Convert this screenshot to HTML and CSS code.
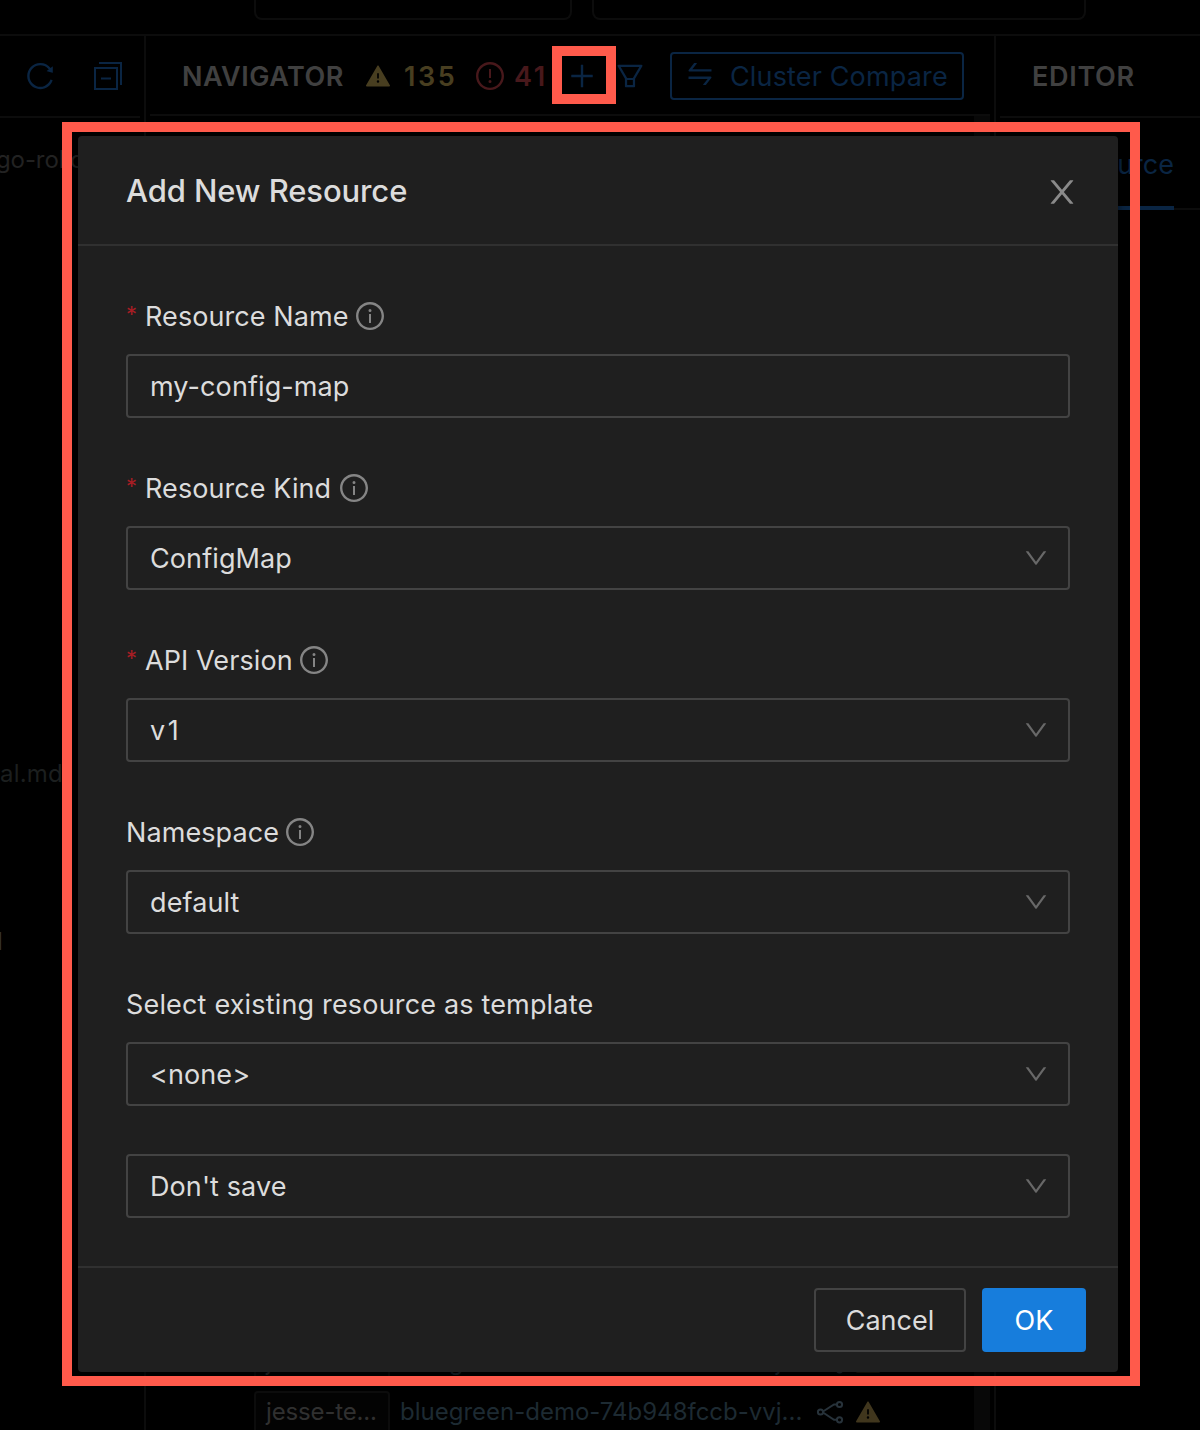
FILE: index.html
```html
<!DOCTYPE html>
<html lang="en">
<head>
<meta charset="utf-8">
<title>Add New Resource</title>
<link rel="stylesheet" href="styles.css">
</head>
<body>
<svg class="sprite" aria-hidden="true">
  <symbol id="info" viewBox="64 64 896 896"><path d="M512 64C264.6 64 64 264.6 64 512s200.6 448 448 448 448-200.6 448-448S759.4 64 512 64zm0 820c-205.4 0-372-166.6-372-372s166.6-372 372-372 372 166.6 372 372-166.6 372-372 372z"/><path d="M464 336a48 48 0 1096 0 48 48 0 10-96 0zm72 112h-48c-4.4 0-8 3.6-8 8v272c0 4.4 3.6 8 8 8h48c4.4 0 8-3.6 8-8V456c0-4.4-3.6-8-8-8z"/></symbol>
  <symbol id="down" viewBox="64 64 896 896"><path d="M884 256h-75c-5.1 0-9.9 2.5-12.9 6.6L512 654.2 227.9 262.6c-3-4.1-7.8-6.6-12.9-6.6h-75c-6.5 0-10.3 7.4-6.5 12.7l352.6 486.1c12.8 17.6 39 17.6 51.7 0l352.6-486.1c3.9-5.3.1-12.7-6.4-12.7z"/></symbol>
  <symbol id="warning" viewBox="64 64 896 896"><path d="M955.7 856l-416-720c-6.2-10.7-16.9-16-27.7-16s-21.6 5.3-27.7 16l-416 720C56 877.4 71.4 904 96 904h832c24.6 0 40-26.6 27.7-48zM480 416c0-4.4 3.6-8 8-8h48c4.4 0 8 3.6 8 8v184c0 4.4-3.6 8-8 8h-48c-4.4 0-8-3.6-8-8V416zm32 352a48.01 48.01 0 010-96 48.01 48.01 0 010 96z"/></symbol>
  <symbol id="links" viewBox="0 0 28 24"><g fill="none" stroke="currentColor" stroke-width="2"><circle cx="4.5" cy="12" r="2.6"/><circle cx="23.5" cy="4.5" r="2.6"/><circle cx="23.5" cy="19.8" r="2.6"/><path d="M7 11.500L18 4.500h3M7 12.500L18 19.800h3"/></g></symbol>
</svg>

<div class="app">
  <header class="topbar">
    <div class="search search-project"></div>
    <div class="search search-cluster"></div>
  </header>
  <div class="panes">
    <section class="pane files">
      <div class="pane-head">
        <svg class="icon i28" viewBox="64 64 896 896"><path d="M909.1 209.3l-56.4 44.1C775.8 155.1 656.2 92 521.9 92 290 92 102.3 279.5 102 511.5 101.7 743.7 289.8 932 521.9 932c181.3 0 335.8-115 394.6-276.1 1.5-4.2-.7-8.900-4.900-10.300l-56.700-19.500a8 8 0 00-10.100 4.800c-1.800 5-3.800 10-5.900 14.900-17.300 41-42.100 77.800-73.700 109.400A344.770 344.770 0 01655.900 829c-42.300 17.900-87.400 27-133.800 27-46.500 0-91.500-9.100-133.800-27A341.500 341.500 0 01279 755.200a342.160 342.160 0 01-73.700-109.400c-17.900-42.400-27-87.400-27-133.900s9.100-91.500 27-133.900c17.300-41 42.100-77.800 73.700-109.400 31.600-31.600 68.400-56.400 109.300-73.800 42.300-17.900 87.400-27 133.800-27 46.500 0 91.500 9.100 133.800 27a341.500 341.500 0 01109.300 73.800c9.900 9.900 19.200 20.400 27.800 31.400l-60.200 47a8 8 0 003 14.100l175.600 43c5 1.200 9.900-2.600 9.900-7.700l.8-180.900c-.1-6.600-7.800-10.300-13-6.200z"/></svg>
        <svg class="icon i28" viewBox="0 0 28 28"><path fill="none" stroke="currentColor" stroke-width="2" d="M5 1h22v22M1 6h22v21H1zM7 16.500h10"/></svg>
      </div>
      <div class="tree">
        <div class="tree-row">go-rollouts</div>
        <div class="tree-row doc">al.md</div>
        <div class="tree-row tail">l</div>
      </div>
    </section>
    <section class="pane navigator">
      <div class="pane-head">
        <h2 class="pane-title">NAVIGATOR</h2>
        <span class="count warn"><svg class="icon i24" viewBox="0 0 24 24"><use href="#warning"/></svg><b>135</b></span>
        <span class="count error"><svg class="icon i28" viewBox="64 64 896 896"><path d="M512 64C264.6 64 64 264.6 64 512s200.6 448 448 448 448-200.6 448-448S759.4 64 512 64zm0 820c-205.4 0-372-166.6-372-372s166.6-372 372-372 372 166.6 372 372-166.6 372-372 372z"/><path d="M464 688a48 48 0 1096 0 48 48 0 10-96 0zm24-112h48c4.4 0 8-3.600 8-8V296c0-4.400-3.600-8-8-8h-48c-4.400 0-8 3.600-8 8v272c0 4.400 3.600 8 8 8z"/></svg><b>41</b></span>
        <div class="nav-actions">
          <svg class="icon i28" viewBox="64 64 896 896"><path d="M482 152h60q8 0 8 8v704q0 8-8 8h-60q-8 0-8-8V160q0-8 8-8zM176 474h672q8 0 8 8v60q0 8-8 8H176q-8 0-8-8v-60q0-8 8-8z"/></svg>
          <svg class="icon i28" viewBox="64 64 896 896"><path fill-rule="evenodd" d="M880.1 154H143.9c-24.5 0-39.8 26.7-27.5 48L349 597.4V838c0 17.7 14.200 32 31.800 32h262.400c17.600 0 31.800-14.300 31.800-32V597.400L907.700 202c12.200-21.300-3.100-48-27.600-48zM603.400 798H420.600V642h182.900v156zm9.600-236.600l-9.500 16.600h-183l-9.500-16.600L212.700 226h598.600L613 561.400z"/></svg>
          <div class="compare"><svg class="icon i28" viewBox="64 64 896 896"><path d="M847.9 592H152c-4.400 0-8 3.600-8 8v60c0 4.400 3.600 8 8 8h605.200L612.900 851c-4.100 5.200-.4 13 6.300 13h72.500c4.900 0 9.500-2.200 12.600-6.100l168.800-214.100c16.500-21 1.600-51.800-25.200-51.800zM872 356H266.800l144.300-183c4.100-5.200.4-13-6.300-13h-72.500c-4.900 0-9.500 2.200-12.600 6.100L150.900 380.200c-16.500 21-1.600 51.800 25.100 51.800h696c4.400 0 8-3.600 8-8v-60c0-4.400-3.600-8-8-8z"/></svg><span>Cluster Compare</span></div>
        </div>
      </div>
      <div class="nav-body">
        <div class="nav-list">
          <div class="nav-row"><span class="tag">jesse-te...</span><span class="res">bluegreen-demo-74b948fccb-vvj...</span><svg class="icon links" viewBox="0 0 28 24"><use href="#links"/></svg><svg class="icon i24 rowwarn"><use href="#warning"/></svg></div>
          <div class="nav-row"><span class="tag">jesse-te...</span><span class="res">bluegreen-demo-74b948fccb-vvj...</span><svg class="icon links" viewBox="0 0 28 24"><use href="#links"/></svg><svg class="icon i24 rowwarn"><use href="#warning"/></svg></div>
        </div>
        <div class="scrollbar"></div>
      </div>
    </section>
    <section class="pane editor">
      <div class="pane-head"><h2 class="pane-title">EDITOR</h2></div>
      <div class="tabs"><span class="tab">Resource</span></div>
    </section>
  </div>
</div>

<div class="mark mark-dialog"></div>
<div class="mark mark-add"></div>

<div class="modal" role="dialog">
  <div class="modal-head">
    <h1>Add New Resource</h1>
    <svg class="icon close" viewBox="64 64 896 896"><path d="M563.8 512l262.500-312.900c4.400-5.200.7-13.100-6.100-13.100h-79.800c-4.700 0-9.200 2.100-12.300 5.700L511.600 449.800 295.100 191.700c-3-3.600-7.500-5.700-12.300-5.700H203c-6.800 0-10.500 7.900-6.100 13.100L459.400 512 196.900 824.900A7.950 7.950 0 00203 838h79.800c4.700 0 9.200-2.100 12.300-5.700l216.500-258.100 216.500 258.100c3 3.600 7.500 5.700 12.300 5.700h79.800c6.800 0 10.500-7.900 6.100-13.100L563.800 512z"/></svg>
  </div>
  <form class="modal-body">
    <div class="field">
      <label class="label"><i class="req">*</i><span>Resource Name</span><svg class="icon i28"><use href="#info"/></svg></label>
      <div class="control"><span>my-config-map</span></div>
    </div>
    <div class="field">
      <label class="label kind"><i class="req">*</i><span>Resource Kind</span><svg class="icon i28"><use href="#info"/></svg></label>
      <div class="control"><span>ConfigMap</span><svg class="icon i24"><use href="#down"/></svg></div>
    </div>
    <div class="field">
      <label class="label"><i class="req">*</i><span>API Version</span><svg class="icon i28"><use href="#info"/></svg></label>
      <div class="control version"><span>v1</span><svg class="icon i24"><use href="#down"/></svg></div>
    </div>
    <div class="field">
      <label class="label"><span>Namespace</span><svg class="icon i28"><use href="#info"/></svg></label>
      <div class="control"><span>default</span><svg class="icon i24"><use href="#down"/></svg></div>
    </div>
    <div class="field">
      <label class="label template"><span>Select existing resource as template</span></label>
      <div class="control"><span>&lt;none&gt;</span><svg class="icon i24"><use href="#down"/></svg></div>
    </div>
    <div class="field">
      <div class="control"><span>Don't save</span><svg class="icon i24"><use href="#down"/></svg></div>
    </div>
  </form>
  <div class="modal-foot">
    <button class="btn cancel" type="button">Cancel</button>
    <button class="btn ok" type="button">OK</button>
  </div>
</div>
</body>
</html>
```
FILE: styles.css
```css
* { box-sizing: border-box; }

body {
  margin: 0;
  position: relative;
  width: 1200px;
  height: 1430px;
  overflow: hidden;
  background: #000;
  color: #dcdcdc;
  font-family: Inter, "Liberation Sans", sans-serif;
  font-size: 27px;
  line-height: 44px;
}

h1, h2 { margin: 0; }
.sprite { position: absolute; width: 0; height: 0; }
.icon { fill: currentColor; flex: none; display: block; }
.i28 { width: 28px; height: 28px; }
.i24 { width: 24px; height: 24px; }

/* Dimmed application */
.app { height: 1430px; display: flex; flex-direction: column; }

.topbar {
  height: 36px;
  flex: none;
  display: flex;
  gap: 20px;
  padding-left: 254px;
  border-bottom: 2px solid #0c0c0c;
}
.search {
  height: 20px;
  border: 2px solid #0c0c0c;
  border-top: 0;
  border-radius: 0 0 8px 8px;
}
.search-project { width: 318px; }
.search-cluster { width: 494px; }

.panes { flex: 1; min-height: 0; display: grid; grid-template-columns: 146px 850px 204px; }
.pane { min-width: 0; overflow: hidden; display: flex; flex-direction: column; }
.pane-head { display: flex; align-items: center; flex: none; }
.pane-title { padding-top: 2px; font-size: 27px; font-weight: 600; color: #404040; }

.files { border-right: 2px solid #0c0c0c; }
.files .pane-head {
  width: 140px;
  height: 82px;
  padding-left: 26px;
  gap: 40px;
  color: #0a2543;
  border-bottom: 2px solid #0c0c0c;
}
.tree { font-size: 24px; color: #222; padding-top: 20px; }
.tree-row { height: 44px; white-space: nowrap; margin-left: -4px; letter-spacing: -.1px; }
.tree-row.doc { margin: 570px 0 0 0; letter-spacing: .2px; color: #1c1f1f; }
.tree-row.tail { margin: 124px 0 0 -3px; color: #333; }

.navigator { border-right: 2px solid #0c0c0c; }
.navigator .pane-head {
  height: 80px;
  margin: 0 4px;
  padding: 2px 0 0 32px;
  border-bottom: 2px solid #0c0c0c;
}
.navigator .pane-title { width: 184px; letter-spacing: .5px; }
.count { display: flex; align-items: center; letter-spacing: 2.6px; }
.count b { padding-top: 2px; font-weight: 600; }
.warn { width: 110px; gap: 14px; color: #483e20; }
.error { width: 92px; gap: 10px; color: #48181b; }
.nav-actions { display: flex; align-items: center; color: #0a2543; }
.nav-actions > .icon { margin-right: 20px; }
.compare {
  width: 294px;
  height: 48px;
  margin-left: 6px;
  padding-left: 14px;
  display: flex;
  align-items: center;
  gap: 16px;
  border: 2px solid #0a2543;
  border-radius: 4px;
  white-space: nowrap;
  letter-spacing: .15px;
}
.compare .icon { margin-bottom: 4px; }
.compare span { padding-top: 2px; }
.nav-body { flex: 1; display: flex; margin-right: 4px; min-height: 0; }
.nav-list { flex: 1; padding: 1221px 0 0 108px; overflow: hidden; }
.nav-row { display: flex; align-items: center; height: 50px; font-size: 24px; white-space: nowrap; }
.tag {
  width: 136px;
  height: 42px;
  line-height: 38px;
  padding-left: 10px;
  letter-spacing: -.15px;
  border: 2px solid #0c0c0c;
  border-radius: 4px;
  background: #030303;
  color: #303030;
}
.res { width: 426px; padding-left: 10px; color: #1d2a32; }
.links { width: 28px; height: 24px; color: #27323a; }
.rowwarn { margin-left: 12px; color: #40361d; }
.scrollbar { width: 16px; background: #080808; }

.editor .pane-head { height: 82px; margin-left: 4px; padding-left: 32px; border-bottom: 2px solid #0c0c0c; }
.editor .pane-title { letter-spacing: .7px; }
.tabs { height: 92px; margin-left: 4px; padding: 24px 0 0 52px; border-bottom: 2px solid #0c0c0c; }
.tab { display: block; width: 122px; height: 68px; line-height: 46px; text-align: right; color: #0a2543; border-bottom: 4px solid #0a2543; }

/* Annotation frames lie over the application */
.mark { position: absolute; border: 10px solid #ff5a4b; z-index: 2; }
.mark-dialog { left: 62px; top: 122px; width: 1078px; height: 1264px; }
.mark-add { left: 552px; top: 46px; width: 64px; height: 58px; }

/* Dialog */
.modal {
  position: absolute;
  left: 78px;
  top: 136px;
  width: 1040px;
  height: 1236px;
  display: flex;
  flex-direction: column;
  background: #1f1f1f;
  border-radius: 4px;
  box-shadow: 0 4px 10px rgba(0, 0, 0, .6);
}
.modal-head {
  height: 110px;
  padding: 2px 40px 0 48px;
  display: flex;
  align-items: center;
  justify-content: space-between;
  border-bottom: 2px solid #303030;
}
.modal-head h1 { font-size: 31px; font-weight: 500; letter-spacing: -.1px; }
.close { width: 32px; height: 32px; margin-top: 2px; color: #8a8a8a; }
.modal-body { flex: 1; padding: 48px 48px 0; display: flex; flex-direction: column; gap: 48px; }
.field { display: flex; flex-direction: column; gap: 16px; }
.label { height: 44px; display: flex; align-items: center; white-space: nowrap; letter-spacing: .08px; }
.label span, .control span { padding-top: 2px; }
.label .icon { color: #858585; margin-left: 7px; }
.label.kind .icon { margin-left: 9px; }
.label.template { letter-spacing: .17px; }
.req { width: 19px; padding-bottom: 5px; font-style: normal; font-size: 22px; color: #a61d24; }
.control {
  height: 64px;
  padding: 0 20px 0 22px;
  display: flex;
  align-items: center;
  justify-content: space-between;
  letter-spacing: .1px;
  border: 2px solid #434343;
  border-radius: 4px;
}
.control.version { letter-spacing: 2.5px; }
.control .icon { color: #686868; }
.modal-foot {
  height: 106px;
  padding: 0 32px;
  display: flex;
  align-items: center;
  justify-content: flex-end;
  gap: 16px;
  border-top: 2px solid #303030;
}
.btn { height: 64px; padding: 2px 0 0; border-radius: 4px; font: inherit; color: #dcdcdc; }
.cancel { width: 152px; background: transparent; border: 2px solid #434343; }
.ok { width: 104px; background: #177ddc; border: 0; color: #fff; }
```
